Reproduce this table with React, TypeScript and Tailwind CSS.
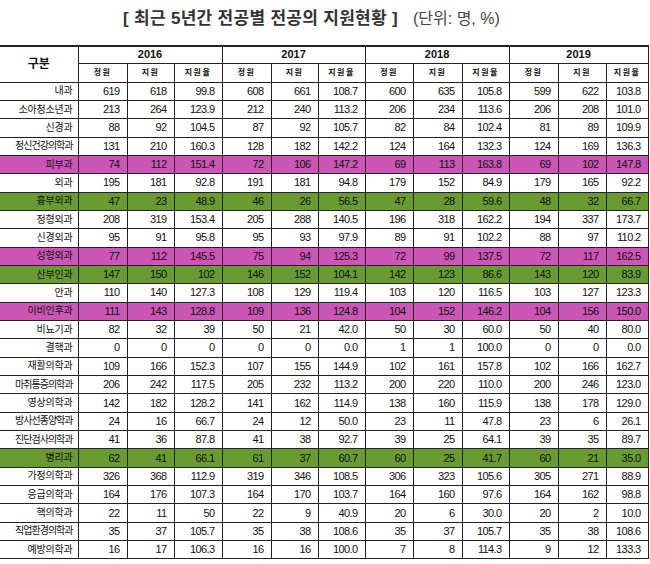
const years = ["2016", "2017", "2018", "2019"];
const subLabels = ["정원", "지원", "지원율"];
const colWidths = [78, 49, 47, 48, 49, 47, 47, 48, 49, 47, 49, 48, 42];

type Row = { name: string; tone?: "pink" | "green"; values: string[] };

const rows: Row[] = [
  { name: "내과", values: ["619", "618", "99.8", "608", "661", "108.7", "600", "635", "105.8", "599", "622", "103.8"] },
  { name: "소아청소년과", values: ["213", "264", "123.9", "212", "240", "113.2", "206", "234", "113.6", "206", "208", "101.0"] },
  { name: "신경과", values: ["88", "92", "104.5", "87", "92", "105.7", "82", "84", "102.4", "81", "89", "109.9"] },
  { name: "정신건강의학과", values: ["131", "210", "160.3", "128", "182", "142.2", "124", "164", "132.3", "124", "169", "136.3"] },
  { name: "피부과", tone: "pink", values: ["74", "112", "151.4", "72", "106", "147.2", "69", "113", "163.8", "69", "102", "147.8"] },
  { name: "외과", values: ["195", "181", "92.8", "191", "181", "94.8", "179", "152", "84.9", "179", "165", "92.2"] },
  { name: "흉부외과", tone: "green", values: ["47", "23", "48.9", "46", "26", "56.5", "47", "28", "59.6", "48", "32", "66.7"] },
  { name: "정형외과", values: ["208", "319", "153.4", "205", "288", "140.5", "196", "318", "162.2", "194", "337", "173.7"] },
  { name: "신경외과", values: ["95", "91", "95.8", "95", "93", "97.9", "89", "91", "102.2", "88", "97", "110.2"] },
  { name: "성형외과", tone: "pink", values: ["77", "112", "145.5", "75", "94", "125.3", "72", "99", "137.5", "72", "117", "162.5"] },
  { name: "산부인과", tone: "green", values: ["147", "150", "102", "146", "152", "104.1", "142", "123", "86.6", "143", "120", "83.9"] },
  { name: "안과", values: ["110", "140", "127.3", "108", "129", "119.4", "103", "120", "116.5", "103", "127", "123.3"] },
  { name: "이비인후과", tone: "pink", values: ["111", "143", "128.8", "109", "136", "124.8", "104", "152", "146.2", "104", "156", "150.0"] },
  { name: "비뇨기과", values: ["82", "32", "39", "50", "21", "42.0", "50", "30", "60.0", "50", "40", "80.0"] },
  { name: "결핵과", values: ["0", "0", "0", "0", "0", "0.0", "1", "1", "100.0", "0", "0", "0.0"] },
  { name: "재활의학과", values: ["109", "166", "152.3", "107", "155", "144.9", "102", "161", "157.8", "102", "166", "162.7"] },
  { name: "마취통증의학과", values: ["206", "242", "117.5", "205", "232", "113.2", "200", "220", "110.0", "200", "246", "123.0"] },
  { name: "영상의학과", values: ["142", "182", "128.2", "141", "162", "114.9", "138", "160", "115.9", "138", "178", "129.0"] },
  { name: "방사선종양학과", values: ["24", "16", "66.7", "24", "12", "50.0", "23", "11", "47.8", "23", "6", "26.1"] },
  { name: "진단검사의학과", values: ["41", "36", "87.8", "41", "38", "92.7", "39", "25", "64.1", "39", "35", "89.7"] },
  { name: "병리과", tone: "green", values: ["62", "41", "66.1", "61", "37", "60.7", "60", "25", "41.7", "60", "21", "35.0"] },
  { name: "가정의학과", values: ["326", "368", "112.9", "319", "346", "108.5", "306", "323", "105.6", "305", "271", "88.9"] },
  { name: "응급의학과", values: ["164", "176", "107.3", "164", "170", "103.7", "164", "160", "97.6", "164", "162", "98.8"] },
  { name: "핵의학과", values: ["22", "11", "50", "22", "9", "40.9", "20", "6", "30.0", "20", "2", "10.0"] },
  { name: "직업환경의학과", values: ["35", "37", "105.7", "35", "38", "108.6", "35", "37", "105.7", "35", "38", "108.6"] },
  { name: "예방의학과", values: ["16", "17", "106.3", "16", "16", "100.0", "7", "8", "114.3", "9", "12", "133.3"] },
];

const font = "font-['Liberation_Sans','Noto_Sans_CJK_KR',sans-serif]";

function rowBg(tone?: "pink" | "green") {
  if (tone === "pink") return "bg-[#cc56b5]";
  if (tone === "green") return "bg-[#699a34]";
  return "bg-white";
}

export default function App() {
  return (
    <div className={`h-[564px] w-[650px] overflow-hidden bg-white text-[#111] ${font}`}>
      <div className="flex h-[45px] items-center pb-[7px] pl-[123px]">
        <span className="text-[17px] font-bold tracking-[0.3px] text-[#333]">
          [ 최근 5년간 전공별 전공의 지원현황 ]
        </span>
        <span className="ml-[15px] text-[16px] text-[#444]">(단위: 명, %)</span>
      </div>

      <table className="w-[648px] table-fixed border-collapse">
        <colgroup>
          {colWidths.map((w, i) => (
            <col key={i} style={{ width: w }} />
          ))}
        </colgroup>
        <thead>
          <tr className="h-[17px] border-t-2 border-[#222]">
            <th
              rowSpan={2}
              className="border-r border-b border-[#222] text-center text-[12px] font-bold"
            >
              구분
            </th>
            {years.map((y) => (
              <th
                key={y}
                colSpan={3}
                className="border border-[#222] p-0 text-center text-[11px] leading-none font-bold"
              >
                {y}
              </th>
            ))}
          </tr>
          <tr className="h-[19px]">
            {years.map((y) =>
              subLabels.map((s) => (
                <th
                  key={y + s}
                  className="border border-[#222] p-0 text-center text-[8px] leading-none font-bold tracking-[1.5px]"
                >
                  {s}
                </th>
              )),
            )}
          </tr>
        </thead>
        <tbody>
          {rows.map((r) => (
            <tr key={r.name} className={`h-[18.35px] ${rowBg(r.tone)}`}>
              <td
                className={`border border-l-0 border-[#222] p-0 pr-[5px] text-right text-[10px] leading-none whitespace-nowrap ${
                  r.name.length >= 7 ? "tracking-[-1px]" : "tracking-[-0.2px]"
                }`}
              >
                {r.name}
              </td>
              {r.values.map((v, i) => (
                <td
                  key={i}
                  className="border border-[#222] p-0 pr-[7px] text-right text-[11px] leading-none tracking-[-0.6px]"
                >
                  {v}
                </td>
              ))}
            </tr>
          ))}
        </tbody>
      </table>
    </div>
  );
}
